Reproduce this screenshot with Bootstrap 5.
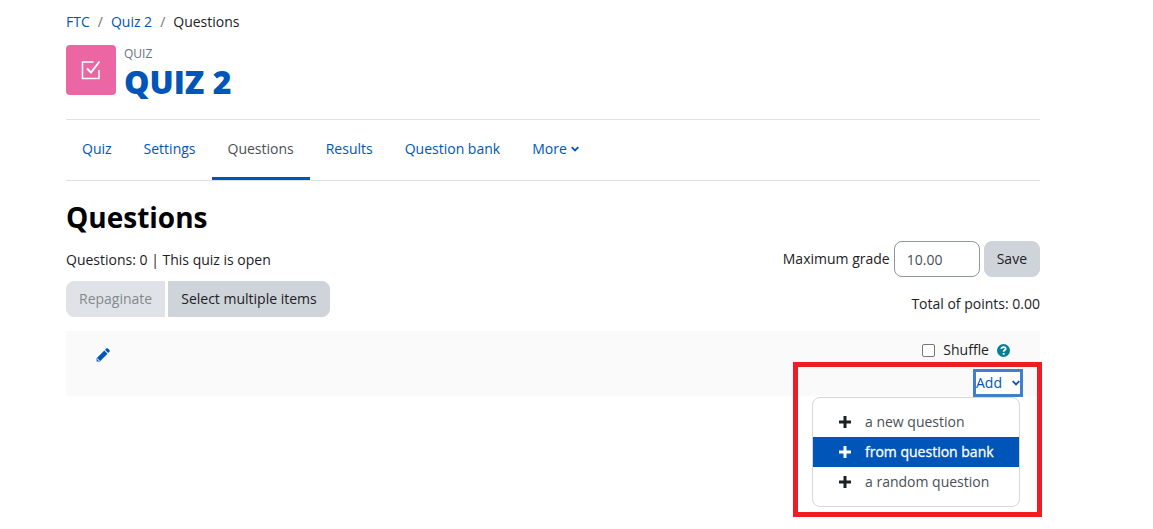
<!DOCTYPE html>
<html lang="en">
<head>
<meta charset="utf-8">
<meta name="viewport" content="width=device-width, initial-scale=1">
<title>Quiz 2: Questions</title>
<link href="https://cdn.jsdelivr.net/npm/bootstrap@5.3.0/dist/css/bootstrap.min.css" rel="stylesheet">
<style>
  :root { --brand: #0055b8; --ink: #1d2125; }
  body { font: 400 14px/22px "Open Sans", "Noto Sans", sans-serif; color: var(--ink); background: #fff; }
  a { color: var(--brand); text-decoration: none; }
  .page { padding: 11px 113px 24px 66px; }
  .breadcrumb { --bs-breadcrumb-item-padding-x: 8px; --bs-breadcrumb-divider-color: #6a737b; --bs-breadcrumb-item-active-color: var(--ink); font-size: 14px; }
  .activity-icon { width: 50px; height: 50px; border-radius: 4px; background: #eb66a2; }
  .activity-kind { font-size: 12px; line-height: 18px; color: #6a737b; }
  .activity-title { font-size: 32px; line-height: 38px; font-weight: 800; color: var(--brand); }
  .page-head { padding-bottom: 18px; }
  .tabs { border-top: 1px solid #dee2e6; border-bottom: 1px solid #dee2e6; height: 62px; }
  .tabs .nav-link { display: flex; align-items: center; height: 60px; padding: 0 16px; border-bottom: 3px solid transparent; color: var(--brand); }
  .tabs .nav-link.active { color: #495057; border-bottom-color: var(--brand); }
  .caret { width: 8px; height: 6px; }
  .section-title { font-size: 28px; line-height: 36px; font-weight: 700; color: #000; margin: 18px 0 6px; }
  .btn-soft { --bs-btn-bg: #ced4da; --bs-btn-border-color: #ced4da; --bs-btn-color: var(--ink); --bs-btn-hover-bg: #bfc6cd;
    --bs-btn-disabled-bg: #dfe3e7; --bs-btn-disabled-border-color: #dfe3e7; --bs-btn-disabled-color: #84898d; --bs-btn-disabled-opacity: 1;
    --bs-btn-padding-x: 12px; --bs-btn-padding-y: 6px; --bs-btn-font-size: 14px; --bs-btn-border-radius: 8px; line-height: 22px; }
  .btn-row { gap: 3px; margin-top: 10px; }
  .grade-box { width: 86px; height: 36px; padding: 6px 12px; font-size: 14px; color: #495057; border-color: #8f959e; border-radius: 8px; }
  .slots { background: #fafafa; height: 65px; margin-top: 14px; padding: 8px 30px 0; }
  .shuffle-box.form-check-input { width: 13px; height: 13px; margin: 0; border: 1px solid #767676; border-radius: 2px; }
  .add-area { margin-right: -13px; }
  .add-toggle { height: 28px; padding: 0; border: 3px solid #3f80cc; background: #fff; color: var(--brand); line-height: 22px; width: 50px; }
  .add-area .dropdown-menu { top: 100%; right: 3px; margin: 0; min-width: 208px; padding: 9px 0; border-radius: 8px; border: 1px solid #d5d7d9; font-size: 14px; }
  .add-area .dropdown-item { display: flex; align-items: center; height: 30px; padding: 0 24px 0 26px; color: #495057; }
  .add-area .dropdown-item svg { width: 12px; height: 12px; margin-right: 14px; color: var(--ink); }
  .add-area .dropdown-item.active { background: var(--brand); color: #fff; -webkit-text-stroke: .3px #fff; }
  .add-area .dropdown-item.active svg { color: #fff; }
  .callout-frame { position: absolute; z-index: 1100; top: -7px; right: -19px; width: 249px; height: 155px; border: 5px solid #ee1c25; pointer-events: none; }
</style>
</head>
<body>
<div class="page min-vh-100">
  <nav aria-label="breadcrumb">
    <ol class="breadcrumb mb-0">
      <li class="breadcrumb-item"><a href="#">FTC</a></li>
      <li class="breadcrumb-item"><a href="#">Quiz 2</a></li>
      <li class="breadcrumb-item active" aria-current="page">Questions</li>
    </ol>
  </nav>

  <header class="page-head d-flex gap-2 mt-2 pt-1">
    <div class="activity-icon d-flex align-items-center justify-content-center">
      <svg width="20" height="20" viewBox="0 0 20 20" fill="none" stroke="#fff" stroke-width="1.5" aria-hidden="true"><path d="M12.500 2H1.500V18.500H18V10"/><path d="M6 8.500L10 12.500L18.500 1.500" stroke-width="2"/></svg>
    </div>
    <div>
      <div class="activity-kind">QUIZ</div>
      <h1 class="activity-title mb-0">QUIZ 2</h1>
    </div>
  </header>

  <ul class="tabs nav flex-nowrap">
    <li class="nav-item"><a class="nav-link" href="#">Quiz</a></li>
    <li class="nav-item"><a class="nav-link" href="#">Settings</a></li>
    <li class="nav-item"><a class="nav-link active" aria-current="page" href="#">Questions</a></li>
    <li class="nav-item"><a class="nav-link" href="#">Results</a></li>
    <li class="nav-item"><a class="nav-link" href="#">Question bank</a></li>
    <li class="nav-item"><a class="nav-link gap-1" href="#">More
      <svg class="caret" viewBox="0 0 8 6" fill="none" stroke="currentColor" stroke-width="1.800" aria-hidden="true"><path d="M.7 1.200L4 4.500L7.300 1.200"/></svg></a></li>
  </ul>

  <main>
    <h2 class="section-title">Questions</h2>
    <div class="d-flex justify-content-between">
      <div>
        <div class="pt-2">Questions: 0 | This quiz is open</div>
        <div class="btn-row d-flex">
          <button type="button" class="btn btn-soft rounded-end-0" disabled>Repaginate</button>
          <button type="button" class="btn btn-soft rounded-start-0">Select multiple items</button>
        </div>
      </div>
      <div class="text-end">
        <form class="d-flex align-items-center gap-1 mb-3">
          <label for="maxgrade">Maximum grade</label>
          <input id="maxgrade" type="text" class="form-control grade-box" value="10.00">
          <button type="button" class="btn btn-soft">Save</button>
        </form>
        <div>Total of points: 0.00</div>
      </div>
    </div>

    <div class="slots d-flex justify-content-between">
      <a href="#" class="pt-1" aria-label="Edit heading">
        <svg width="14" height="14" viewBox="0 0 14 14" aria-hidden="true"><path fill="#0055b8" d="M10.200.6a1.200 1.200 0 0 1 1.700 0l1.500 1.500a1.200 1.200 0 0 1 0 1.700L12.200 5 9 1.800zM8.300 2.500l3.200 3.200-7.700 7.700H.6v-3.200z"/><path fill="none" stroke="#fafafa" stroke-width=".8" d="M1.600 10.400v1.200h.9v.9h1.200"/></svg>
      </a>
      <div class="d-flex flex-column align-items-end">
        <div class="d-flex align-items-center">
          <input id="shuffle" type="checkbox" class="form-check-input shuffle-box me-2">
          <label for="shuffle">Shuffle</label>
          <a href="#" class="d-flex ms-2" aria-label="Help with Shuffle">
            <svg width="13" height="13" viewBox="0 0 13 13" aria-hidden="true"><circle cx="6.500" cy="6.500" r="6.500" fill="#008196"/><path d="M4.300 4.900C4.500 2.500 8.800 2.500 8.700 4.900C8.600 6.100 6.600 6.100 6.600 7.800" fill="none" stroke="#fff" stroke-width="1.800"/><path d="M5.700 8.900h1.900v1.800H5.700z" fill="#fff"/></svg>
          </a>
        </div>
        <div class="add-area dropdown mt-2">
          <button type="button" class="add-toggle d-flex align-items-center justify-content-between" aria-expanded="true">Add
            <svg class="caret" viewBox="0 0 8 6" fill="none" stroke="currentColor" stroke-width="1.800" aria-hidden="true"><path d="M.7 1.200L4 4.500L7.300 1.200"/></svg></button>
          <div class="dropdown-menu show">
            <a class="dropdown-item" href="#"><svg viewBox="0 0 12 12" fill="currentColor" aria-hidden="true"><path d="M4.500 0h3v4.500H12v3H7.500V12h-3V7.500H0v-3h4.500z"/></svg>a new question</a>
            <a class="dropdown-item active" href="#"><svg viewBox="0 0 12 12" fill="currentColor" aria-hidden="true"><path d="M4.500 0h3v4.500H12v3H7.500V12h-3V7.500H0v-3h4.500z"/></svg>from question bank</a>
            <a class="dropdown-item" href="#"><svg viewBox="0 0 12 12" fill="currentColor" aria-hidden="true"><path d="M4.500 0h3v4.500H12v3H7.500V12h-3V7.500H0v-3h4.500z"/></svg>a random question</a>
          </div>
          <div class="callout-frame"></div>
        </div>
      </div>
    </div>
  </main>
</div>
<script src="https://cdn.jsdelivr.net/npm/bootstrap@5.3.0/dist/js/bootstrap.bundle.min.js"></script>
</body>
</html>
